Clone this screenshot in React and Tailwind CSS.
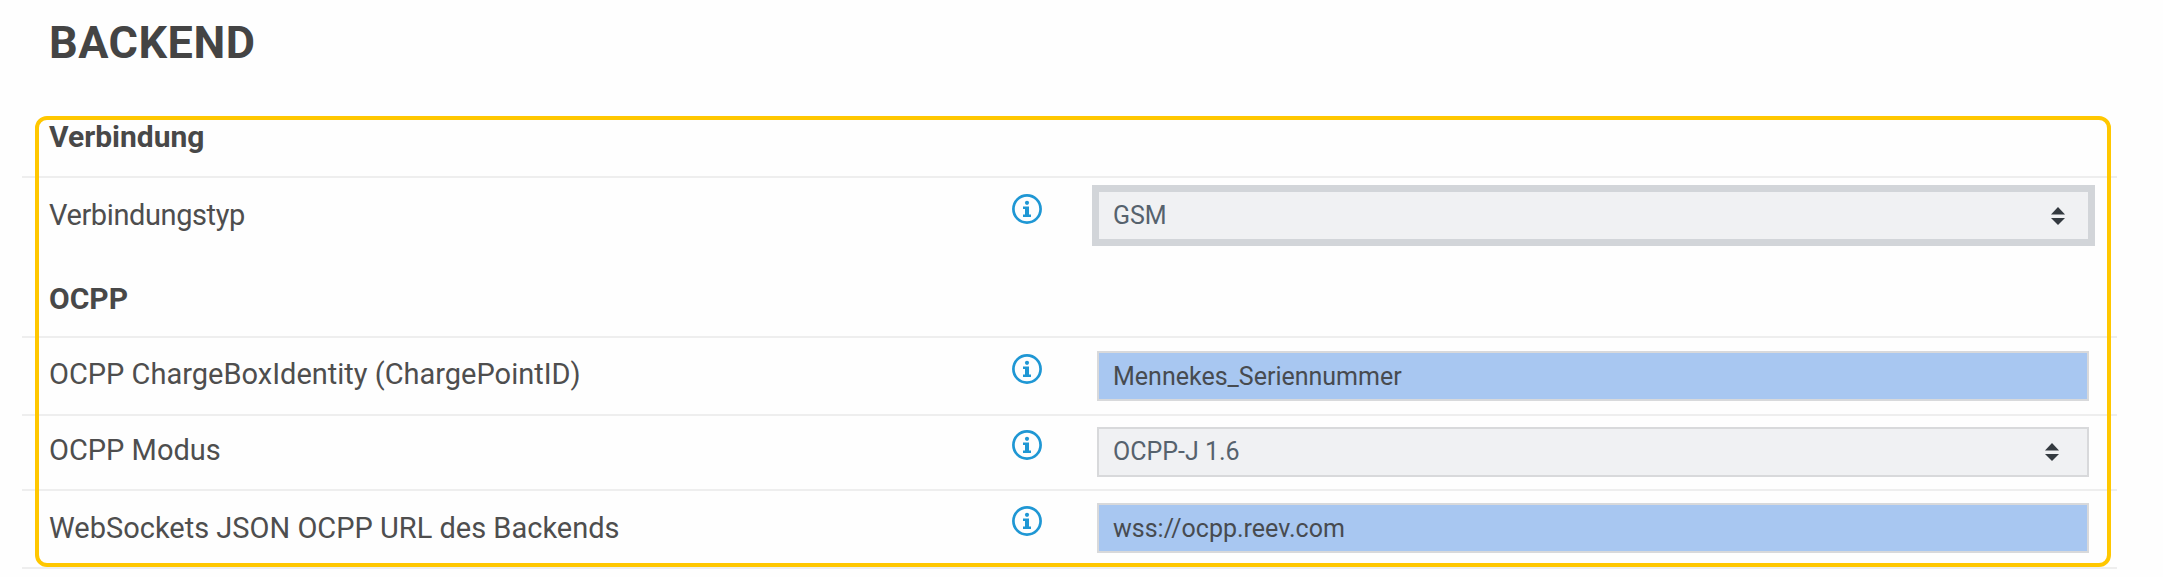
import React from "react";

const InfoIcon = () => (
  <svg width="30" height="30" viewBox="0 0 30 30" className="shrink-0">
    <circle cx="15" cy="15" r="13.6" fill="none" stroke="#1f97d4" strokeWidth="2.7" />
    <circle cx="15" cy="8.8" r="2.1" fill="#1f97d4" />
    <path d="M11 12.5h6v8h2v2.5h-8v-2.5h2v-5.5h-2z" fill="#1f97d4" />
  </svg>
);

const Chevrons = () => (
  <svg width="16" height="20" viewBox="0 0 16 20" className="absolute right-[29px] top-1/2 -translate-y-1/2 pointer-events-none">
    <path d="M8 1l7 7.5H1z" fill="#343a40" />
    <path d="M1 12h14l-7 7z" fill="#343a40" />
  </svg>
);

const SelectField = ({ value, thick }) => (
  <div className="relative flex-1">
    <select
      defaultValue={value}
      className={`w-full appearance-none bg-[#f0f1f3] pl-[14px] text-[#56626d] text-[25px] ${
        thick
          ? "h-[61px] border-[7px] border-[#d2d5d9]"
          : "h-[50px] border-2 border-[#d8d9db]"
      }`}
    >
      <option>{value}</option>
    </select>
    <Chevrons />
  </div>
);

const TextField = ({ value }) => (
  <input
    readOnly
    value={value}
    className="flex-1 min-w-0 h-[50px] border-2 border-[#d8d9db] bg-[#a8c7f1] pl-[14px] text-[#474b50] text-[25px] outline-none"
  />
);

const Row = ({ label, children, className, iconClass, labelClass, inputClass }) => (
  <div className={`flex items-start pl-[27px] ${className}`}>
    <div className={`w-[963px] text-[29px] leading-[32px] text-[#4e4e4e] ${labelClass}`}>{label}</div>
    <div className={iconClass}>
      <InfoIcon />
    </div>
    <div className={`flex flex-1 ${inputClass}`}>{children}</div>
  </div>
);

const App = () => {
  return (
    <div className="w-[2163px] h-[577px] overflow-hidden bg-[#fefefe] font-['Roboto',sans-serif]">
      <h1 className="pl-[49px] pt-[21px] h-[116px] text-[45px] leading-[44px] font-bold text-[#444444] tracking-[0.5px]">
        BACKEND
      </h1>

      <div className="relative ml-[22px] w-[2095px]">
        <div className="h-[62px] border-b-2 border-[#eeeeee] pl-[27px] pt-[5px] text-[30px] leading-[32px] font-bold text-[#484848]">
          Verbindung
        </div>
        <Row
          label="Verbindungstyp"
          className="h-[95px] pt-[7px]"
          labelClass="pt-[14px] tracking-[-0.4px]"
          iconClass="pt-[9px] mr-[50px]"
          inputClass="mr-[22px]"
        >
          <SelectField value="GSM" thick />
        </Row>
        <div className="h-[65px] border-b-2 border-[#eeeeee] pl-[27px] pt-[10px] text-[30px] leading-[32px] font-bold text-[#484848]">
          OCPP
        </div>
        <Row
          label="OCPP ChargeBoxIdentity (ChargePointID)"
          className="h-[78px] pt-[13px] border-b-2 border-[#eeeeee]"
          labelClass="pt-[7px]"
          iconClass="pt-[3px] mr-[55px]"
          inputClass="mr-[28px]"
        >
          <TextField value="Mennekes_Seriennummer" />
        </Row>
        <Row
          label="OCPP Modus"
          className="h-[75px] pt-[11px] border-b-2 border-[#eeeeee]"
          labelClass="pt-[7px]"
          iconClass="pt-[3px] mr-[55px]"
          inputClass="mr-[28px]"
        >
          <SelectField value="OCPP-J 1.6" />
        </Row>
        <Row
          label="WebSockets JSON OCPP URL des Backends"
          className="h-[78px] pt-[12px] border-b-2 border-[#eeeeee]"
          labelClass="pt-[9px]"
          iconClass="pt-[3px] mr-[55px]"
          inputClass="mr-[28px]"
        >
          <TextField value="wss://ocpp.reev.com" />
        </Row>

        {/* yellow highlight around the form */}
        <div className="absolute left-[13px] right-[6px] top-0 bottom-[2px] rounded-[12px] border-4 border-[#ffc700] pointer-events-none" />
      </div>
    </div>
  );
};

export default App;
